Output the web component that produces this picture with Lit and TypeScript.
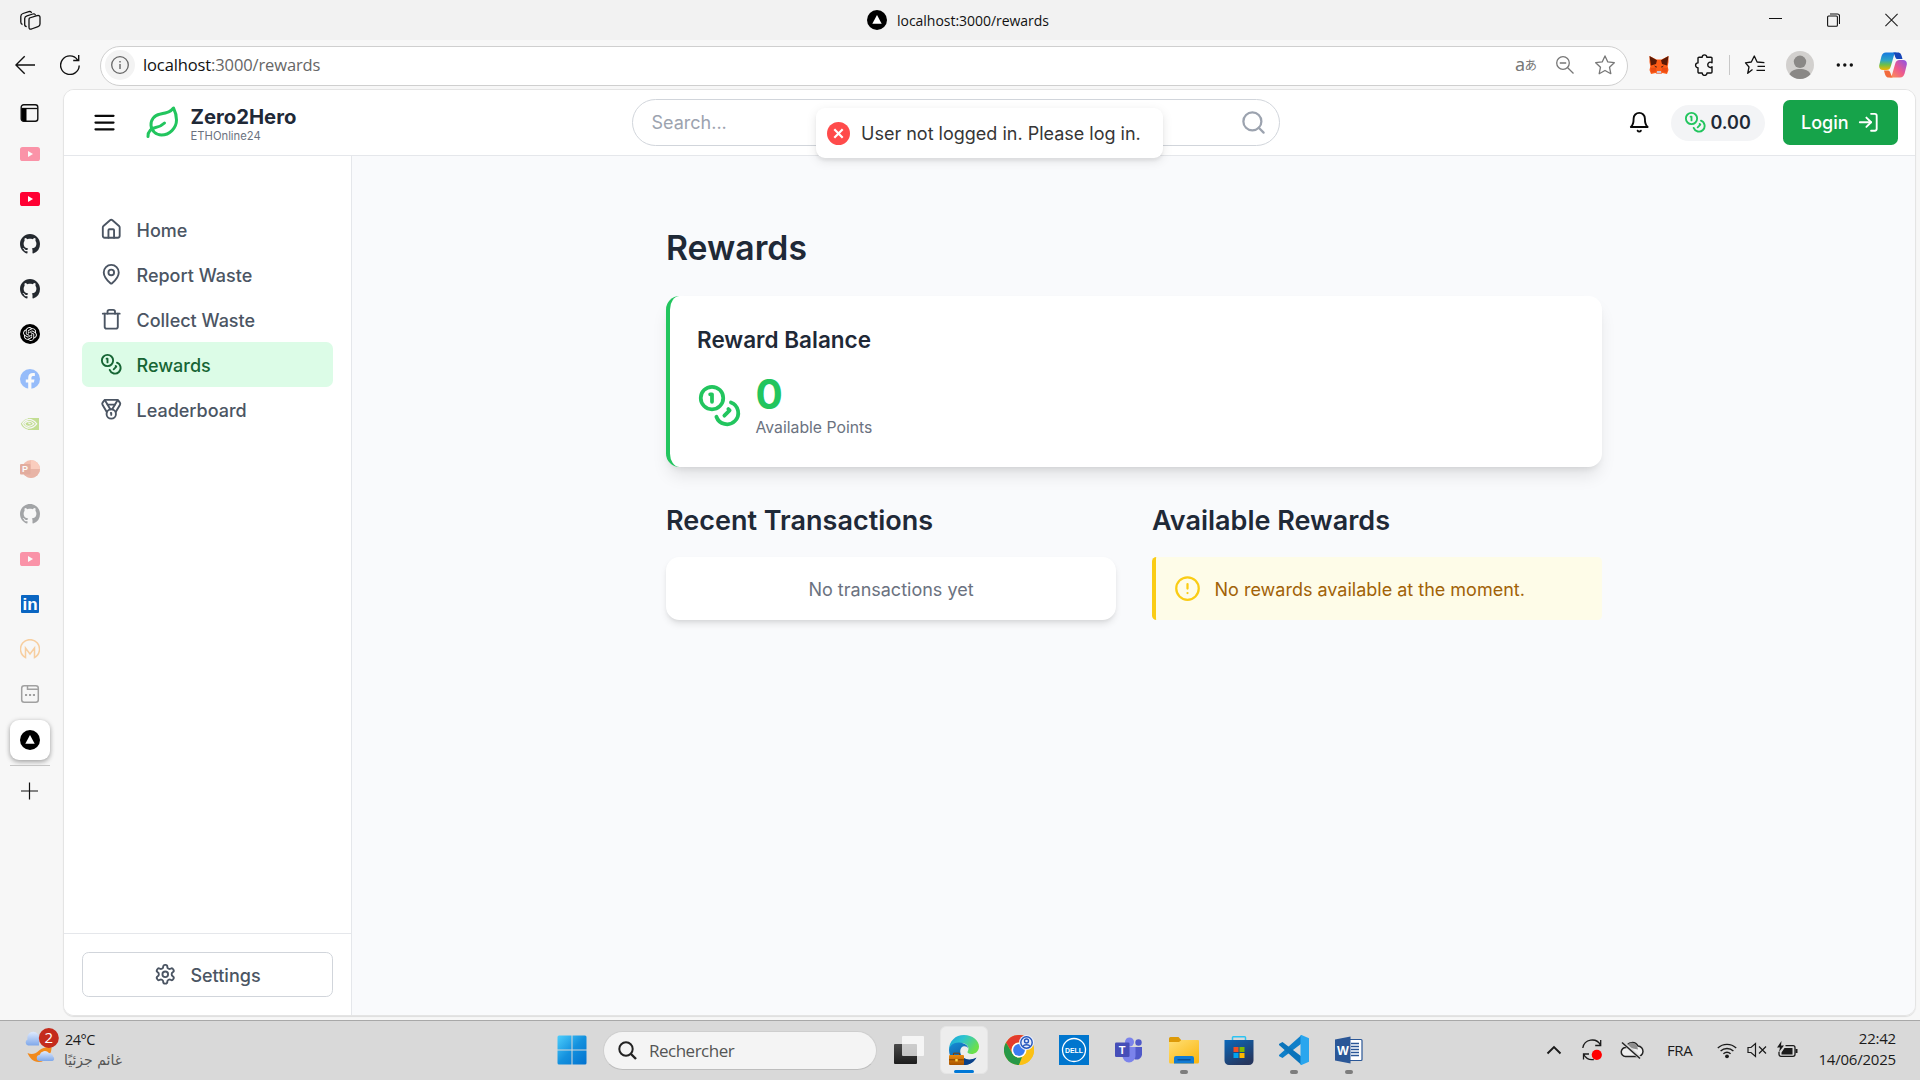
import { LitElement, html, svg, css, SVGTemplateResult, TemplateResult } from "lit";
import { customElement, property } from "lit/decorators.js";

const glyph = (size: number, box: string, body: SVGTemplateResult, h = size): TemplateResult =>
  html`<svg class="g" width=${size} height=${h} viewBox=${box} fill="none">${body}</svg>`;

/* ---------- outline icons on a 24 grid ---------- */
const outlines: Record<string, SVGTemplateResult> = {
  menu: svg`<path d="M4 12h16M4 6h16M4 18h16"/>`,
  leaf: svg`<path d="M11 20A7 7 0 0 1 9.8 6.1C15.5 5 17 4.48 19 2c1 2 2 4.18 2 8 0 5.5-4.78 10-10 10Z"/><path d="M2 21c0-3 1.85-5.36 5.08-6C9.5 14.52 12 13 13 12"/>`,
  search: svg`<circle cx="11" cy="11" r="8"/><path d="m21 21-4.3-4.3"/>`,
  bell: svg`<path d="M6 8a6 6 0 0 1 12 0c0 7 3 9 3 9H3s3-2 3-9"/><path d="M10.3 21a1.94 1.94 0 0 0 3.4 0"/>`,
  coins: svg`<circle cx="8" cy="8" r="6"/><path d="M18.09 10.37A6 6 0 1 1 10.34 18"/><path d="M7 6h1v4"/><path d="m16.71 13.88.7.71-2.82 2.82"/>`,
  login: svg`<path d="M15 3h4a2 2 0 0 1 2 2v14a2 2 0 0 1-2 2h-4"/><path d="m10 17 5-5-5-5"/><path d="M15 12H3"/>`,
  home: svg`<path d="M15 21v-8a1 1 0 0 0-1-1h-4a1 1 0 0 0-1 1v8"/><path d="M3 10a2 2 0 0 1 .709-1.528l7-5.999a2 2 0 0 1 2.582 0l7 5.999A2 2 0 0 1 21 10v9a2 2 0 0 1-2 2H5a2 2 0 0 1-2-2z"/>`,
  pin: svg`<path d="M20 10c0 4.993-5.539 10.193-7.399 11.799a1 1 0 0 1-1.202 0C9.539 20.193 4 14.993 4 10a8 8 0 0 1 16 0"/><circle cx="12" cy="10" r="3"/>`,
  trash: svg`<path d="M3 6h18"/><path d="M19 6v14c0 1-1 2-2 2H7c-1 0-2-1-2-2V6"/><path d="M8 6V4c0-1 1-2 2-2h4c1 0 2 1 2 2v2"/>`,
  medal: svg`<path d="M7.21 15 2.66 7.14a2 2 0 0 1 .13-2.2L4.4 2.8A2 2 0 0 1 6 2h12a2 2 0 0 1 1.6.8l1.6 2.14a2 2 0 0 1 .14 2.2L16.79 15"/><path d="M11 12 5.12 2.2"/><path d="m13 12 5.88-9.8"/><path d="M8 7h8"/><circle cx="12" cy="17" r="5"/><path d="M12 18v-2h-.5"/>`,
  gear: svg`<path d="M12.22 2h-.44a2 2 0 0 0-2 2v.18a2 2 0 0 1-1 1.73l-.43.25a2 2 0 0 1-2 0l-.15-.08a2 2 0 0 0-2.73.73l-.22.38a2 2 0 0 0 .73 2.73l.15.1a2 2 0 0 1 1 1.72v.51a2 2 0 0 1-1 1.74l-.15.09a2 2 0 0 0-.73 2.73l.22.38a2 2 0 0 0 2.73.73l.15-.08a2 2 0 0 1 2 0l.43.25a2 2 0 0 1 1 1.73V20a2 2 0 0 0 2 2h.44a2 2 0 0 0 2-2v-.18a2 2 0 0 1 1-1.73l.43-.25a2 2 0 0 1 2 0l.15.08a2 2 0 0 0 2.73-.73l.22-.39a2 2 0 0 0-.73-2.73l-.15-.08a2 2 0 0 1-1-1.74v-.5a2 2 0 0 1 1-1.74l.15-.09a2 2 0 0 0 .73-2.73l-.22-.38a2 2 0 0 0-2.73-.73l-.15.08a2 2 0 0 1-2 0l-.43-.25a2 2 0 0 1-1-1.73V4a2 2 0 0 0-2-2z"/><circle cx="12" cy="12" r="3"/>`,
  alert: svg`<circle cx="12" cy="12" r="10"/><path d="M12 8v4M12 16h.01"/>`,
};
const outline = (name: string, size: number) =>
  glyph(size, "0 0 24 24", svg`<g stroke="currentColor" stroke-width="2" stroke-linecap="round" stroke-linejoin="round">${outlines[name]}</g>`);

/* ---------- site icons of the vertical tabs, 20 grid ---------- */
const youtube = svg`<rect y="3" width="20" height="14" rx="2.6" fill="#ff0033"/><path d="M8 7l5 3-5 3z" fill="#fff"/>`;
const github = svg`<path transform="scale(1.25)" fill="#24292f" fill-rule="evenodd" d="M8 0C3.58 0 0 3.58 0 8c0 3.54 2.29 6.53 5.47 7.59.4.07.55-.17.55-.38 0-.19-.01-.82-.01-1.49-2.01.37-2.53-.49-2.69-.94-.09-.23-.48-.94-.82-1.13-.28-.15-.68-.52-.01-.53.63-.01 1.08.58 1.23.82.72 1.21 1.87.87 2.33.66.07-.52.28-.87.51-1.07-1.78-.2-3.64-.89-3.64-3.95 0-.87.31-1.59.82-2.15-.08-.2-.36-1.02.08-2.12 0 0 .67-.21 2.2.82.64-.18 1.32-.27 2-.27s1.36.09 2 .27c1.53-1.04 2.2-.82 2.2-.82.44 1.1.16 1.92.08 2.12.51.56.82 1.27.82 2.15 0 3.07-1.87 3.75-3.65 3.95.29.25.54.73.54 1.48 0 1.07-.01 1.93-.01 2.2 0 .21.15.46.55.38A8.01 8.01 0 0 0 16 8c0-4.42-3.58-8-8-8z"/>`;
const knot = svg`<circle cx="10" cy="10" r="10" fill="#000"/><path transform="translate(3.1 3.1) scale(.575)" fill="#fff" d="M22.2819 9.8211a5.9847 5.9847 0 0 0-.5157-4.9108 6.0462 6.0462 0 0 0-6.5098-2.9A6.0651 6.0651 0 0 0 4.9807 4.1818a5.9847 5.9847 0 0 0-3.9977 2.9 6.0462 6.0462 0 0 0 .7427 7.0966 5.98 5.98 0 0 0 .511 4.9107 6.051 6.051 0 0 0 6.5146 2.9001A5.9847 5.9847 0 0 0 13.2599 24a6.0557 6.0557 0 0 0 5.7718-4.2058 5.9894 5.9894 0 0 0 3.9977-2.9001 6.0557 6.0557 0 0 0-.7475-7.0729zm-9.022 12.6081a4.4755 4.4755 0 0 1-2.8764-1.0408l.1419-.0804 4.7783-2.7582a.7948.7948 0 0 0 .3927-.6813v-6.7369l2.02 1.1686a.071.071 0 0 1 .038.052v5.5826a4.504 4.504 0 0 1-4.4945 4.4944zm-9.6607-4.1254a4.4708 4.4708 0 0 1-.5346-3.0137l.142.0852 4.783 2.7582a.7712.7712 0 0 0 .7806 0l5.8428-3.3685v2.3324a.0804.0804 0 0 1-.0332.0615L9.74 19.9502a4.4992 4.4992 0 0 1-6.1408-1.6464zM2.3408 7.8956a4.485 4.485 0 0 1 2.3655-1.9728V11.6a.7664.7664 0 0 0 .3879.6765l5.8144 3.3543-2.0201 1.1685a.0757.0757 0 0 1-.071 0l-4.8303-2.7865A4.504 4.504 0 0 1 2.3408 7.872zm16.5963 3.8558L13.1038 8.364 15.1192 7.2a.0757.0757 0 0 1 .071 0l4.8303 2.7913a4.4944 4.4944 0 0 1-.6765 8.1042v-5.6772a.79.79 0 0 0-.407-.667zm2.0107-3.0231l-.142-.0852-4.7735-2.7818a.7759.7759 0 0 0-.7854 0L9.409 9.2297V6.8974a.0662.0662 0 0 1 .0284-.0615l4.8303-2.7866a4.4992 4.4992 0 0 1 6.6802 4.66zM8.3065 12.863l-2.02-1.1638a.0804.0804 0 0 1-.038-.0567V6.0742a4.4992 4.4992 0 0 1 7.3757-3.4537l-.142.0805L8.704 5.459a.7948.7948 0 0 0-.3927.6813zm1.0976-2.3654l2.602-1.4998 2.6069 1.4998v2.9994l-2.5974 1.4997-2.6067-1.4997Z"/>`;
const facebook = svg`<circle cx="10" cy="10" r="10" fill="#0866ff"/><path fill="#fff" d="M8.2 20v-6.6H5.8v-2.9h2.4V9c0-3.4 1.5-5 4.9-5 .6 0 1.4.1 1.8.2v2.7h-1.3c-1.6 0-2.2.6-2.2 2.1v1.5h3.1l-.6 2.9h-2.5V20z"/>`;
const nvidia = svg`<path fill="#76b900" d="M8 4h11v12H8z"/><path fill="#76b900" d="M.8 9.800C3 6.500 5.500 4.900 8.500 4.500v11.300C5 15.300 2 13 .8 9.800z"/><g stroke="#f7f7f7" stroke-width="1.200"><path d="M8 5.500c3.800-.4 6.500 1.600 8.700 4.300-2.200 2.800-5 4.600-8.700 4.300"/><path d="M8 5.600C5.500 6 3.600 7.700 2.600 9.600c.9 2.200 2.800 4 5.400 4.500"/><path d="M13.800 9.800C12.300 8 10.300 7 8 7.300c-1.500.2-2.700 1.200-3.300 2.300.6 1.500 2 2.600 3.600 2.700 2.200.1 4-1 5.500-2.500z"/><path d="M8 9c1.200 0 2 .5 2.500 1.200"/></g>`;
const slides = svg`<circle cx="11" cy="10" r="9" fill="#ed6c47"/><path d="M11 1a9 9 0 0 1 9 9h-9z" fill="#ff8f6b"/><path d="M20 10a9 9 0 0 1-18 0z" fill="#d35230"/><rect y="5" width="10.500" height="10.500" rx="1" fill="#c43e1c"/><text x="5" y="13.300" font-family="Liberation Sans" font-size="9" font-weight="700" fill="#fff" text-anchor="middle">P</text>`;
const linkedin = svg`<rect x="1" y="1" width="18" height="18" rx="1" fill="#0a66c2"/><text x="10" y="15.900" font-family="Liberation Sans" font-size="17" font-weight="700" fill="#fff" text-anchor="middle">in</text>`;
const monogram = svg`<path d="M5.500 18.500A9.500 9.500 0 1 1 14.500 18.500V9l-4.500 6-4.500-6z" stroke="#f7931e" stroke-width="1.500"/>`;
const blankPage = svg`<rect x="1.700" y="1.700" width="16.600" height="16.600" rx="2.500" stroke="#222" stroke-width="1.500"/><path d="M7.500 2v3.300h10.500" stroke="#222" stroke-width="1.500"/><path d="M5 11h2.100M9 11h2.100M12.900 11H15" stroke="#222" stroke-width="2"/>`;
const triangle = svg`<circle cx="10" cy="10" r="10" fill="#000"/><path d="M10 5l4.700 8.700H5.300z" fill="#fff"/>`;

const sites: Array<[SVGTemplateResult, boolean]> = [
  [youtube, true], [youtube, false], [github, false], [github, false], [knot, false],
  [facebook, true], [nvidia, true], [slides, true], [github, true], [youtube, true],
  [linkedin, false], [monogram, true], [blankPage, true],
];

/* ---------- web page ---------- */
@customElement("rewards-page")
class RewardsPage extends LitElement {
  @property() active = "Rewards";
  static styles = css`
    :host { display: grid; grid-template-rows: 66px 1fr; position: relative; overflow: hidden; background: #f9fafc; color: #1f2937; font-family: Inter, "Liberation Sans", sans-serif; font-size: 18px; line-height: 27px; }
    * { box-sizing: border-box; }
    .g { display: block; flex: none; }
    .bar { display: flex; align-items: center; background: #fff; border-bottom: 1px solid #e5e7eb; padding: 0 17px 0 27px; }
    .menu { color: #0a0a0a; }
    .leaf { color: #22c55e; margin-left: 26.500px; }
    .brand { display: flex; flex-direction: column; margin-left: 10px; padding-top: 2px; width: 441px; }
    .name { font-weight: 700; font-size: 20.250px; line-height: 22px; }
    .tag { font-size: 11.250px; line-height: 12px; color: #6b7280; margin-top: 2px; }
    .search { display: flex; align-items: center; justify-content: space-between; width: 648px; height: 47px; border: 1px solid #d1d5db; border-radius: 24px; padding: 0 12px 0 19px; color: #9ca3af; }
    .bell { margin-left: 348px; color: #0a0a0a; }
    .pill { display: flex; align-items: center; gap: 4.500px; height: 36px; width: 94px; margin-left: 20.500px; padding-left: 13px; background: #f3f4f6; border-radius: 18px; font-weight: 600; }
    .green { color: #22c55e; }
    .login { display: flex; align-items: center; gap: 8.500px; width: 115px; height: 45px; margin-left: 18px; padding-left: 18.500px; border-radius: 6.750px; background: #16a34a; color: #fff; font-weight: 500; }
    .cols { display: grid; grid-template-columns: 288px 1fr; min-height: 0; }
    .side { display: flex; flex-direction: column; justify-content: space-between; background: #fff; border-right: 1px solid #e5e7eb; color: #4b5563; font-weight: 500; }
    .nav { padding: 51px 18px 0; }
    .item { display: flex; align-items: center; gap: 14px; height: 45px; padding-left: 18px; border-radius: 6.750px; font-weight: 500; }
    .item span, .settings span, .warn p { padding-top: 1.500px; }
    .item.on { background: #dcfce7; color: #166534; }
    .foot { border-top: 1px solid #e5e7eb; padding: 18px; }
    .settings { display: flex; align-items: center; justify-content: center; gap: 13.500px; height: 45px; border: 1px solid #d1d5db; border-radius: 6.750px; }
    .main { padding: 71.500px 0 0 314px; }
    .inner { width: 936px; }
    h1, h2, h3 { margin: 0; font-weight: 600; }
    h1 { font-size: 33.750px; line-height: 40.500px; margin-bottom: 28px; }
    .balance { height: 171px; padding: 28px 27px 0; background: #fff; border-left: 4px solid #22c55e; border-radius: 13.500px; box-shadow: 0 11px 17px -3px rgba(0,0,0,.1), 0 4.500px 7px -4px rgba(0,0,0,.1); }
    h3 { font-size: 22.500px; line-height: 31.500px; margin-bottom: 16px; }
    .points { display: flex; align-items: center; gap: 13.500px; }
    .zero { font-size: 40.500px; line-height: 45px; font-weight: 700; color: #22c55e; }
    .small { font-size: 15.750px; line-height: 22.500px; color: #6b7280; }
    .pair { display: grid; grid-template-columns: 1fr 1fr; gap: 36px; margin-top: 36px; }
    h2 { font-size: 27px; line-height: 36px; margin-bottom: 18px; }
    .none { height: 63px; padding: 18.600px 18px 0; text-align: center; background: #fff; border-radius: 13.500px; color: #6b7280; box-shadow: 0 4.500px 7px -1px rgba(0,0,0,.1), 0 2px 4px -2px rgba(0,0,0,.1); }
    .warn { display: flex; align-items: center; gap: 13.500px; height: 63px; padding-left: 18px; border-left: 4px solid #facc15; border-radius: 4.500px; background: #fefce8; color: #a16207; }
    .warn p { margin: 0; }
    .yellow { color: #facc15; }
    .toast { position: absolute; left: 752px; top: 18px; width: 347px; height: 50px; display: flex; align-items: center; gap: 11px; padding-left: 11px; background: #fff; border-radius: 9px; color: #363636; box-shadow: 0 3px 11px rgba(0,0,0,.1), 0 3px 3px rgba(0,0,0,.05); white-space: nowrap; }
  `;
  private items: Array<[string, string]> = [["home", "Home"], ["pin", "Report Waste"], ["trash", "Collect Waste"], ["coins", "Rewards"], ["medal", "Leaderboard"]];
  render() {
    return html`
      <header class="bar">
        <span class="menu">${outline("menu", 27)}</span>
        <span class="leaf">${outline("leaf", 36)}</span>
        <div class="brand"><span class="name">Zero2Hero</span><span class="tag">ETHOnline24</span></div>
        <div class="search"><span>Search...</span>${outline("search", 27)}</div>
        <span class="bell">${outline("bell", 22.5)}</span>
        <div class="pill"><span class="green">${outline("coins", 22.5)}</span>0.00</div>
        <div class="login">Login ${outline("login", 22.5)}</div>
      </header>
      <div class="cols">
        <aside class="side">
          <nav class="nav">${this.items.map(([i, t]) => html`<div class="item ${t === this.active ? "on" : ""}">${outline(i, 22.5)}<span>${t}</span></div>`)}</nav>
          <div class="foot"><div class="settings">${outline("gear", 22.5)}<span>Settings</span></div></div>
        </aside>
        <main class="main"><div class="inner">
          <h1>Rewards</h1>
          <section class="balance">
            <h3>Reward Balance</h3>
            <div class="points"><span class="green">${outline("coins", 45)}</span><div><div class="zero">0</div><div class="small">Available Points</div></div></div>
          </section>
          <div class="pair">
            <section><h2>Recent Transactions</h2><div class="none">No transactions yet</div></section>
            <section><h2>Available Rewards</h2><div class="warn"><span class="yellow">${outline("alert", 27)}</span><p>No rewards available at the moment.</p></div></section>
          </div>
        </div></main>
      </div>
      <div class="toast">${glyph(23, "0 0 23 23", svg`<circle cx="11.500" cy="11.500" r="11.500" fill="#ff4b4b"/><path d="M7.300 7.300l8.400 8.400M15.700 7.300l-8.400 8.400" stroke="#fff" stroke-width="2.200"/>`)}<span>User not logged in. Please log in.</span></div>
    `;
  }
}

/* ---------- taskbar art, 30 grid ---------- */
const art: Record<string, SVGTemplateResult> = {
  start: svg`<defs><linearGradient id="w" gradientUnits="userSpaceOnUse" x1="0" y1="0" x2="30" y2="30"><stop stop-color="#4fd0fd"/><stop offset=".5" stop-color="#1491de"/><stop offset="1" stop-color="#0070cf"/></linearGradient></defs><path fill="url(#w)" d="M.5 2A1.500 1.500 0 0 1 2 .5h12.500v14H.5zM15.500.5H28A1.500 1.500 0 0 1 29.500 2v12.500h-14zM.5 15.500h14v14H2A1.500 1.500 0 0 1 .5 28zM15.500 15.500h14V28a1.500 1.500 0 0 1-1.500 1.500H15.500z"/>`,
  tasks: svg`<defs><linearGradient id="k" x2="0" y2="1"><stop stop-color="#4a4a4a"/><stop offset="1" stop-color="#1d1d1d"/></linearGradient></defs><rect y="9" width="23" height="20" rx="1" fill="url(#k)"/><rect x="8" y="1" width="22" height="20" rx="1" fill="#fff" fill-opacity=".72"/>`,
  edge: svg`<defs><linearGradient id="e1" x1="0" x2="1" y2=".5"><stop stop-color="#18a0dc"/><stop offset=".45" stop-color="#2dc4cf"/><stop offset="1" stop-color="#6be04b"/></linearGradient><linearGradient id="e2" x2=".6" y2="1"><stop stop-color="#168fd8"/><stop offset="1" stop-color="#0d4e94"/></linearGradient><linearGradient id="e3" x2="0" y2="1"><stop stop-color="#e98a10"/><stop offset="1" stop-color="#a85400"/></linearGradient></defs><path fill="url(#e1)" d="M0 15C0 6 6.500 0 15 0s15 5.500 15 11.500c0 5-4 7.500-7.500 7.500-3 0-4-1.200-4-2s1-1.300 1-3.500c0-3-3-5.500-7-5.500C6 8 1 11.500 0 15z"/><path fill="url(#e2)" d="M0 15C.3 10 5.500 7 10.500 7.500c5 .3 8.500 3 8.800 6-1-2-3.300-2.800-5.300-2-3 1.200-3.600 5.500-1.500 9 2.500 4.200 8.500 5.500 14.500 2.500-2.500 4.500-7 7-12 7C6.500 30 0 23 0 15z"/><path fill="#0b4289" d="M13 21.500c3.500 4 9 4 14.500 1-2 4-7 7.500-12.500 7.500z"/><rect y="20" width="15" height="10" rx="1" fill="url(#e3)"/><path d="M4.500 20v-1.800h6V20M0 24.800h15" stroke="#7d3f00" stroke-width="1"/><rect x="6.300" y="24" width="2.400" height="2.400" fill="#ffd54a"/>`,
  chrome: svg`<circle cx="15" cy="15" r="15" fill="#fbc116"/><path fill="#e33b2e" d="M2 7.500A15 15 0 0 1 28 7.500H15A7.500 7.500 0 0 0 8.500 18.700z"/><path fill="#279847" d="M2 7.500l6.500 11.200A7.500 7.500 0 0 0 15 22.500l3-.6L15 30A15 15 0 0 1 2 7.500z"/><path fill="#fbc116" d="M28 7.500A15 15 0 0 1 15 30l6.500-11.300A7.500 7.500 0 0 0 21 10z"/><circle cx="15" cy="15" r="7.500" fill="#fff"/><circle cx="15" cy="15" r="5.900" fill="#3c7cf0"/><circle cx="22.500" cy="7.500" r="7.500" fill="#e9eefc"/><circle cx="22.500" cy="7.500" r="5.700" stroke="#2355bb" stroke-width="1.400"/><circle cx="22.500" cy="6" r="2" stroke="#2355bb" stroke-width="1.400"/><path d="M19 11.500c1-2.300 6-2.300 7 0" stroke="#2355bb" stroke-width="1.400"/>`,
  dell: svg`<rect width="30" height="30" fill="#0076ce"/><circle cx="15" cy="15" r="11.500" stroke="#fff" stroke-width="1.300"/><text x="15" y="17.800" font-family="Liberation Sans" font-size="8" font-weight="700" fill="#fff" text-anchor="middle" textLength="18" lengthAdjust="spacingAndGlyphs">DELL</text>`,
  teams: svg`<circle cx="15.500" cy="7" r="4.500" fill="#7b83eb"/><circle cx="24.500" cy="7.500" r="3.200" fill="#5059c9"/><path fill="#5059c9" d="M19 12h9v7.500a5.500 5.500 0 0 1-8 4.500z"/><path fill="#7b83eb" d="M8.500 12h13v9a6.500 6.500 0 0 1-13 0z"/><rect x="1" y="7.500" width="14.500" height="14.500" rx="1.300" fill="#464eb8"/><text x="8.200" y="18.700" font-family="Liberation Sans" font-size="11" font-weight="700" fill="#fff" text-anchor="middle">T</text>`,
  files: svg`<defs><linearGradient id="f" x2=".8" y2="1"><stop stop-color="#ffdf75"/><stop offset="1" stop-color="#fbb813"/></linearGradient></defs><path fill="#dd9a08" d="M0 3.500A1.500 1.500 0 0 1 1.500 2h8l3 3.500V9H0z"/><path fill="url(#f)" d="M0 7h10l2.500-2H29a1 1 0 0 1 1 1v21a1.500 1.500 0 0 1-1.500 1.500h-27A1.500 1.500 0 0 1 0 27z"/><path fill="#117bd3" d="M5 28.500V23a2 2 0 0 1 2-2h16a2 2 0 0 1 2 2v5.500z"/><path d="M8.500 24.800h13" stroke="#0a4a8c" stroke-width="1.300"/>`,
  store: svg`<defs><linearGradient id="s" x2=".6" y2="1"><stop stop-color="#0b68ba"/><stop offset="1" stop-color="#26375f"/></linearGradient></defs><path d="M8.500 6V2.500a.8.800 0 0 1 .8-.8h11.400a.8.800 0 0 1 .8.800V6" stroke="#2cc3f2" stroke-width="1.500"/><path fill="url(#s)" d="M.5 5h29v20.500a4.500 4.500 0 0 1-4.500 4.500H5a4.500 4.500 0 0 1-4.500-4.500z"/><path fill="#f25022" d="M9.500 12h5v5h-5z"/><path fill="#7fba00" d="M15.500 12h5v5h-5z"/><path fill="#00a4ef" d="M9.500 18h5v5h-5z"/><path fill="#ffb900" d="M15.500 18h5v5h-5z"/>`,
  code: svg`<path fill="#0f7fc9" d="M22.500 0v8.500L3.500 23 .3 21.200a1 1 0 0 1 0-1.500z"/><path fill="#0b74bb" d="M22.500 30v-8.500L3.500 7 .3 8.800a1 1 0 0 0 0 1.500z"/><path fill="#2aa6ee" d="M22.500 0L30 3.300v23.400L22.500 30c-.4.200-.9-.1-1-.6V.600c.1-.5.600-.8 1-.6z"/>`,
  word: svg`<rect x="14" y="4.500" width="14" height="21" rx="1" fill="#fff" stroke="#2b5797" stroke-width="1.200"/><path d="M17 8.500h8M17 11.500h8M17 14.500h8M17 17.500h8M17 20.500h8" stroke="#2b5797" stroke-width="1.500"/><path fill="#2b5797" d="M1 4.500l15.500-3v27L1 25.500z"/><text x="8.800" y="19.500" font-family="Liberation Sans" font-size="12.500" font-weight="700" fill="#fff" text-anchor="middle">W</text>`,
};
const apps: Array<[string, string]> = [["edge", "active"], ["chrome", ""], ["dell", ""], ["teams", ""], ["files", "open"], ["store", ""], ["code", "open"], ["word", "open"]];

@customElement("task-bar")
class TaskBar extends LitElement {
  static styles = css`
    :host { display: flex; align-items: center; height: 60px; box-sizing: border-box; border-top: 1px solid #a8a8a8; background: #d9d9d9; color: #1b1b1b; font-family: "Open Sans", "Noto Sans", sans-serif; }
    * { box-sizing: border-box; }
    .g { display: block; flex: none; }
    .start, .find, .view, .apps { margin-bottom: 1px; }
    .weather { display: flex; align-items: center; width: 557px; padding: 0 0 2px 25px; }
    .sun { margin-bottom: 7px; }
    .temp { display: flex; flex-direction: column; margin-left: 6px; font-size: 14.500px; line-height: 21px; letter-spacing: -.5px; }
    .sky { color: #555; font-family: "DejaVu Sans", sans-serif; font-size: 14px; letter-spacing: 0; width: 57px; white-space: nowrap; }
    .find { display: flex; align-items: center; gap: 12.500px; width: 274px; height: 39px; margin-left: 16px; margin-right: 17px; padding-left: 13.500px; border-radius: 20px; border: 1px solid #cecece; border-bottom-color: #bdbdbd; background: #f4f4f4; color: #555; font-size: 17px; letter-spacing: -.5px; }
    .apps { display: flex; gap: 7px; margin-left: 16px; }
    .app { width: 48px; height: 48px; border-radius: 6px; display: flex; flex-direction: column; align-items: center; padding-top: 9px; gap: 5px; }
    .app.active { background: #ededed; border: 1px solid #e5e5e5; padding-top: 8px; }
    .mark { width: 8px; height: 4px; border-radius: 2px; }
    .open .mark { background: #7d7d7d; }
    .active .mark { width: 20px; background: #0078d7; }
    .tray { display: flex; align-items: center; margin-left: auto; padding: 0 24px 1px 0; }
    .lang { width: 50px; font-size: 15px; letter-spacing: -.4px; }
    .clock { margin: 0 0 2px 20px; width: 78px; text-align: right; font-size: 15px; line-height: 21px; letter-spacing: -.2px; white-space: nowrap; }
  `;
  render() {
    return html`
      <div class="weather">
        <div class="sun">${glyph(34, "0 0 34 36", svg`<defs><linearGradient id="c" x2="0" y2="1"><stop stop-color="#dfeafd"/><stop offset="1" stop-color="#7fa8ea"/></linearGradient></defs>
          <path fill="url(#c)" d="M3 17.500a3.200 3.200 0 0 1-.5-6A5.500 5.500 0 0 1 14 8v9.500z"/><path fill="#f18a1d" d="M2.500 25c4 2 8 1 11-2s9-4 13-6c1 9-5 17-13 17-5 0-9-4-11-9z"/><path fill="url(#c)" d="M15 33a3 3 0 0 1-.5-6 5.500 5.500 0 0 1 9.500-2 4 4 0 0 1 4 3.500 2.500 2.500 0 0 1-.5 4.500z"/>
          <circle cx="23.800" cy="10" r="10" fill="#c42b1c"/><text x="23.800" y="15.200" font-family="Open Sans" font-size="15" fill="#fff" text-anchor="middle">2</text>`, 36)}</div>
        <div class="temp"><span>24°C</span><span class="sky" dir="rtl">غائم جزئيًا</span></div>
      </div>
      <div class="start">${glyph(30, "0 0 30 30", art.start)}</div>
      <div class="find">${glyph(19, "0 0 19 19", svg`<circle cx="8" cy="8" r="6.700" stroke="#222" stroke-width="2"/><path d="M13 13l5 5" stroke="#222" stroke-width="2.400"/>`)}<span>Rechercher</span></div>
      <div class="view">${glyph(30, "0 0 30 30", art.tasks)}</div>
      <div class="apps">${apps.map(([a, s]) => html`<div class="app ${s}">${glyph(30, "0 0 30 30", art[a])}<span class="mark"></span></div>`)}</div>
      <div class="tray">
        ${glyph(58, "-13 0 58 30", svg`<path d="M10.500 18.500l6.500-6.500 6.500 6.500" stroke="#1b1b1b" stroke-width="1.900"/>`, 30)}
        ${glyph(20, "0 0 20 22", svg`<path d="M.8 9A9.500 9.500 0 0 1 18.500 6M18.700 1v5.500h-5.500M1.500 20.500v-5.500H7M1.800 15.500a9.500 9.500 0 0 0 10 5" stroke="#1b1b1b" stroke-width="1.300"/><circle cx="14.800" cy="15.800" r="5.100" fill="#f00"/>`, 22)}
        ${glyph(65, "-19 0 65 22", svg`<path d="M4.500 17.500a4.500 4.500 0 0 1 .500-9 6.500 6.500 0 0 1 12-1.500 5 5 0 0 1-.500 10.500z" fill="#eee" stroke="#222" stroke-width="1.500"/><path d="M6 7.500a5.500 5.500 0 0 1 10-1l1 4-5-1z" fill="#8e8e8e"/><path d="M1.500 3l17.500 16" stroke="#d9d9d9" stroke-width="3.500"/><path d="M1 3.500l18 16" stroke="#222" stroke-width="1.500"/>`, 22)}
        <span class="lang">FRA</span>
        ${glyph(20, "0 0 20 18", svg`<g stroke="#1b1b1b" stroke-width="1.400"><path d="M.8 7a13.500 13.500 0 0 1 18.400 0M3.600 10a9.500 9.500 0 0 1 12.800 0M6.400 12.800a5.500 5.500 0 0 1 7.200 0"/></g><circle cx="10" cy="15.300" r="1.900" fill="#1b1b1b"/>`, 18)}
        ${glyph(40, "-10 0 40 20", svg`<path d="M1 7.500h3L8.500 3.500v13L4 12.500H1z" stroke="#1b1b1b" stroke-width="1.200"/><path d="M12 6.500l7 7M19 6.500l-7 7" stroke="#1b1b1b" stroke-width="1.200"/>`, 20)}
        ${glyph(21, "0 0 21 20", svg`<path d="M8.500 5.700h7.500a2 2 0 0 1 2 2v6.600a2 2 0 0 1-2 2H4a2 2 0 0 1-2-2v-2.500" stroke="#1b1b1b" stroke-width="1.300"/><path d="M7.500 8h8v6.500H4.500v-2zM18.500 9h2v4h-2z" fill="#1b1b1b"/><path d="M4.500 1L0 7.500h3L2 12l5-6.500H4z" fill="#1b1b1b"/>`, 20)}
        <div class="clock">22:42<br />14/06/2025</div>
      </div>
    `;
  }
}

/* ---------- browser window ---------- */
@customElement("app-root")
class AppRoot extends LitElement {
  static styles = css`
    :host { display: grid; grid-template-rows: 40px 49px 931px 60px; width: 1920px; height: 1080px; overflow: hidden; background: #f7f7f7; color: #111; font-family: "Open Sans", "Noto Sans", sans-serif; }
    * { box-sizing: border-box; }
    .g { display: block; flex: none; }
    .title { display: flex; align-items: center; background: #f2f2f2; padding: 0 22px 0 20px; }
    .tab { display: flex; align-items: center; gap: 10px; margin-left: 826px; width: 902px; font-size: 14px; }
    .tab span { letter-spacing: -.03px; }
    .controls { display: flex; gap: 45px; }
    .tools { display: flex; align-items: center; padding: 0 11px 0 15px; }
    .reload { margin: 0 20px 0 25px; }
    .address { display: flex; align-items: center; width: 1528px; height: 40px; margin-top: 2px; padding: 0 12px 2px 4px; border: 1px solid #cfcfcf; border-radius: 20px; background: #fff; }
    .info { display: flex; align-items: center; justify-content: center; width: 30px; height: 30px; border-radius: 15px; background: #f3f3f3; }
    .url { margin-left: 8px; flex: 1; font-size: 16.500px; letter-spacing: -.12px; white-space: nowrap; }
    .path { color: #666; }
    .lang { width: 41px; }
    .glass { width: 39px; }
    .ext { display: flex; align-items: center; margin-left: 21px; }
    .body { display: grid; grid-template-columns: 63px 1853px; }
    .strip { display: flex; flex-direction: column; }
    .cell { display: flex; align-items: center; justify-content: center; height: 45px; width: 60px; }
    .toggle { height: 42.500px; padding-top: 6px; }
    .dim { opacity: .4; }
    .current { width: 40px; height: 40px; margin-top: 2px; display: flex; align-items: center; justify-content: center; border-radius: 9px; background: #fff; box-shadow: 0 1px 5px rgba(0,0,0,.28), 0 3px 5px rgba(0,0,0,.12); }
    .rule { width: 40px; height: 1px; margin: 3.500px 0 2px 10px; background: #c6c6c6; }
    .frame { height: 927px; border: 1px solid #e4e4e4; border-radius: 11px; overflow: hidden; display: grid; box-shadow: 0 1px 1px rgba(0,0,0,.1); }
  `;
  render() {
    return html`
      <div class="title">
        ${glyph(21, "0 0 21 21", svg`<g stroke="#111" stroke-width="1.300" stroke-linejoin="round"><path d="M9.500 8l7.500-2.300q3-.8 3 1.700v6.600q0 2-2 2.700l-6.500 2.300q-2.500.7-2.500-1.700V10.300q0-1.800.5-2.300z"/><path d="M15.500 5.300q-.5-2-2.700-1.300L7 5.800Q4.700 6.500 4.700 8.500v6q0 2 2 2.200"/><path d="M11.500 3q-.5-2-2.700-1.300L3 3.500Q.8 4.200.8 6.500v5.500q0 2.200 1.700 2.500"/></g>`)}
        <div class="tab">${glyph(20, "0 0 20 20", triangle)}<span>localhost:3000/rewards</span></div>
        <div class="controls">
          ${glyph(13, "0 0 13 14", svg`<path d="M0 5.500h13" stroke="#111"/>`, 14)}
          ${glyph(13, "0 0 13 14", svg`<rect x=".6" y="3" width="9.800" height="10.200" rx="1" stroke="#111" stroke-width="1.100"/><path d="M3 1h7.500a2 2 0 0 1 2 2v8" stroke="#111" stroke-width="1.100"/>`, 14)}
          ${glyph(13, "0 0 13 14", svg`<path d="M.4.900l12.200 12.200M12.600.900L.4 13.100" stroke="#222" stroke-width="1.100"/>`, 14)}
        </div>
      </div>
      <div class="tools">
        ${glyph(20, "0 0 20 20", svg`<path d="M20 10H1M9.700 1.200L.9 10l8.800 8.800" stroke="#111" stroke-width="1.400"/>`)}
        <span class="reload">${glyph(20, "0 0 20 20", svg`<path d="M19.200 10.500A9.300 9.300 0 1 1 17.500 4.800M18.700 0v5.500h-5.500" stroke="#111" stroke-width="1.400"/>`)}</span>
        <div class="address">
          <span class="info">${glyph(18, "0 0 18 18", svg`<circle cx="9" cy="9" r="8.300" stroke="#666" stroke-width="1.300"/><path d="M9 8v5M9 5v1.600" stroke="#666" stroke-width="1.400"/>`)}</span>
          <div class="url">localhost<span class="path">:3000/rewards</span></div>
          <span class="lang">${glyph(26, "0 0 26 24", svg`<text x="0" y="17.500" font-family="Noto Sans" font-size="18" fill="#777">a</text><text x="9.500" y="17" font-family="Noto Sans CJK JP" font-size="12.500" fill="#777">あ</text>`, 24)}</span>
          <span class="glass">${glyph(18, "0 0 18 18", svg`<g stroke="#777" stroke-width="1.300"><circle cx="7" cy="7" r="6.300"/><path d="M11.700 11.700l5.800 5.800M3.800 7h6.400"/></g>`)}</span>
          ${glyph(20, "0 0 20 20", svg`<path d="M10 .9l2.800 6 6.500.8-4.800 4.500 1.300 6.500-5.800-3.200-5.800 3.200 1.300-6.500L.7 7.700l6.500-.8z" stroke="#777" stroke-width="1.300" stroke-linejoin="round"/>`)}
        </div>
        <div class="ext">
          ${glyph(20, "0 0 20 20", svg`<path fill="#ff5c16" d="M.5 1l7 3.500h5l7-3.500v6l-.8 4.500.8 3.500-1.500 4-4.500-1L12 19H8l-1.500-1L2 19 .5 15l.8-3.500L.5 7z"/><path fill="#5c1a06" d="M.5 1l7.500 4.300-1 3.700-5 1.500zM19.500 1L12 5.300l1 3.700 5 1.500z"/><path fill="#c52f10" d="M1.500 13l5.500-.5.5 4-5.500 1zM18.500 13l-5.500-.5-.5 4 5.500 1z" opacity=".35"/><path fill="#2b1a1a" d="M5 10.500l3 1.300-.8 1zM15 10.500l-3 1.300.8 1z"/><path fill="#cfc7d8" d="M8 16h4l.4 2.500H7.600z"/>`)}
          ${glyph(60, "-25 0 60 22", svg`<path d="M8.200 3.200a2.300 2.300 0 0 1 4.600 0H17a1 1 0 0 1 1 1v4.600a2.500 2.500 0 0 0-4.200 2 2.500 2.500 0 0 0 4.200 2V18a1 1 0 0 1-1 1h-4a2.300 2.300 0 0 1-4.800 0H5a1 1 0 0 1-1-1v-4.300a2.400 2.400 0 0 1 0-4.800V4.200a1 1 0 0 1 1-1z" stroke="#111" stroke-width="1.400" stroke-linejoin="round"/>`, 22)}
          ${glyph(1, "0 0 1 20", svg`<path d="M.5 0v20" stroke="#c8c8c8"/>`, 20)}
          ${glyph(56, "-15 0 56 20", svg`<g stroke="#111" stroke-width="1.300" stroke-linejoin="round"><path d="M7.500 14.500l-4.800 3.800L4 12 .5 7.800l5.800-.8L9.300 1l2.800 6 7.300.6M12.500 11.300h7.500M11.500 15.300h8.500"/></g>`, 20)}
          ${glyph(28, "0 0 28 28", svg`<circle cx="14" cy="14" r="14" fill="#d2d0ce"/><circle cx="14" cy="10.800" r="6.200" fill="#8a8886"/><path d="M3.500 23.200C5 19.500 9 18 14 18s9 1.500 10.500 5.200A14 14 0 0 1 14 28a14 14 0 0 1-10.500-4.800z" fill="#8a8886"/>`)}
          ${glyph(65, "-22.500 0 65 20", svg`<g fill="#111"><circle cx="1.800" cy="10" r="1.700"/><circle cx="8.300" cy="10" r="1.700"/><circle cx="14.800" cy="10" r="1.700"/></g>`, 20)}
          ${glyph(28, "0 0 28 28", svg`<defs><linearGradient id="p1" x2="0" y2="1"><stop stop-color="#1578e0"/><stop offset=".45" stop-color="#2fa6c5"/><stop offset=".7" stop-color="#6cc04a"/><stop offset="1" stop-color="#f5b400"/></linearGradient><linearGradient id="p2" x1="1" y1="0" x2="0" y2="1"><stop stop-color="#8b52e8"/><stop offset=".5" stop-color="#ee5a8c"/><stop offset="1" stop-color="#ff9a4a"/></linearGradient></defs><path fill="url(#p1)" d="M7 1.500h11.500c-2 0-3 1-3.600 3l-3 10.500c-.9 3-2 4-4.500 4H4c-3 0-4.500-2-3.600-5.500l2-8C3.200 3 4.500 1.500 7 1.500z"/><path fill="#1746b8" d="M14 1.500h5c2.500 0 3.500 2 4.500 6.500h-5.500c-2 0-2.500-6.500-4-6.500z"/><path fill="url(#p2)" d="M21 26.500H9.500c2 0 3-1 3.600-3l3-10.500c.9-3 2-4 4.500-4H24c3 0 4.500 2 3.600 5.500l-2 8c-.8 2.500-2.100 4-4.600 4z"/><path fill="#f26a3c" d="M14 26.500H9.500c-2.500 0-3.500-2.500-4.500-7h4c3 0 3 7 5 7z"/>`)}
        </div>
      </div>
      <div class="body">
        <div class="strip">
          <div class="cell toggle">${glyph(20, "0 0 20 20", svg`<rect x="1.200" y="1.700" width="16.600" height="16.600" rx="2.500" stroke="#111" stroke-width="1.400"/><path d="M1.500 5.500h16" stroke="#111" stroke-width="1.300"/><path d="M1.500 5.500h5V18H3.500a2 2 0 0 1-2-2z" fill="#000"/>`)}</div>
          ${sites.map(([s, dim]) => html`<div class="cell ${dim ? "dim" : ""}">${glyph(20, "0 0 20 20", s)}</div>`)}
          <div class="cell"><div class="current">${glyph(20, "0 0 20 20", triangle)}</div></div>
          <div class="rule"></div>
          <div class="cell">${glyph(20, "0 0 20 20", svg`<path d="M1 10h17M9.500 1.500v17" stroke="#111" stroke-width="1.200"/>`)}</div>
        </div>
        <div class="frame"><rewards-page></rewards-page></div>
      </div>
      <task-bar></task-bar>
    `;
  }
}
